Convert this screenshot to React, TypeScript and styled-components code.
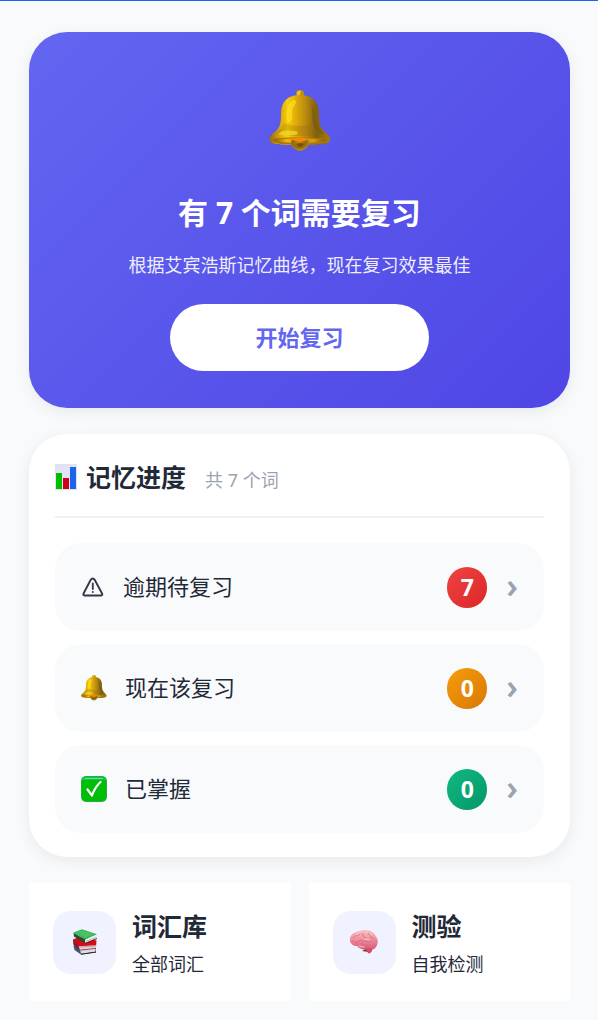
import React from 'react';
import styled, { createGlobalStyle } from 'styled-components';

const GlobalStyle = createGlobalStyle`
  *, *::before, *::after { box-sizing: border-box; }
  body {
    margin: 0;
    background: #f9fafc;
    color: #1f2937;
    font-family: 'Noto Sans', 'Noto Sans CJK SC', sans-serif;
  }
  button { font-family: inherit; color: inherit; border: 0; cursor: pointer; }
  h1, h2, p { margin: 0; }
  svg { display: block; flex: none; }
`;

const Page = styled.main`
  display: flex;
  flex-direction: column;
  gap: 26px;
  padding: 31px 28px 19px 29px;
  border-top: 1px solid #2563eb;
`;

const Hero = styled.section`
  display: flex;
  flex-direction: column;
  align-items: center;
  padding: 58px 24px 37px;
  border-radius: 38px;
  background: linear-gradient(135deg, #6366f1 0%, #4f46e5 100%);
  box-shadow: 0 4px 16px rgba(0, 0, 0, 0.07);
  color: #fff;
  text-align: center;
`;

const HeroTitle = styled.h1`
  margin-top: 41px;
  font-size: 30px;
  line-height: 40px;
  font-weight: 700;
`;

const HeroText = styled.p`
  margin-top: 18px;
  font-size: 18px;
  line-height: 28px;
  opacity: 0.9;
`;

const StartButton = styled.button`
  margin-top: 25px;
  padding: 0 85px 4px;
  height: 67px;
  border-radius: 34px;
  background: #fff;
  color: #6366f1;
  font-size: 22px;
  font-weight: 700;
`;

const Card = styled.section`
  padding: 24px 26px 24px;
  border-radius: 38px;
  background: #fff;
  box-shadow: 0 4px 16px rgba(0, 0, 0, 0.07);
`;

const CardHeader = styled.header`
  display: flex;
  align-items: center;
  gap: 19px;
  padding-bottom: 20px;
  border-bottom: 2px solid #eff0f2;
  margin-bottom: 25px;
`;

const CardTitle = styled.h2`
  display: flex;
  align-items: center;
  gap: 9px;
  font-size: 25px;
  line-height: 38px;
  font-weight: 700;
`;

const CardNote = styled.span`
  padding-top: 6px;
  font-size: 18px;
  line-height: 28px;
  color: #9ca3af;
`;

const RowList = styled.div`
  display: flex;
  flex-direction: column;
  gap: 13px;
`;

const Row = styled.button`
  display: flex;
  align-items: center;
  width: 100%;
  height: 88px;
  padding: 0 26px;
  border-radius: 26px;
  background: #f9fafc;
  font-size: 22px;
  text-align: left;
`;

const RowLabel = styled.span`
  flex: 1;
  margin-left: 18px;
  padding-bottom: 3px;
  line-height: 32px;
`;

const Badge = styled.span<{ $from: string; $to: string }>`
  min-width: 40px;
  height: 41px;
  border-radius: 20px;
  background: linear-gradient(135deg, ${(p) => p.$from}, ${(p) => p.$to});
  color: #fff;
  font-size: 23px;
  font-weight: 700;
  line-height: 40px;
  text-align: center;
`;

const Chevron = styled.span`
  margin-left: 19px;
  padding-bottom: 5px;
  color: #9ca3af;
  font-size: 34px;
  font-weight: 600;
  line-height: 40px;
`;

const Tiles = styled.nav`
  display: grid;
  grid-template-columns: 1fr 1fr;
  gap: 18px;
`;

const Tile = styled.button`
  display: flex;
  align-items: center;
  gap: 16px;
  height: 118px;
  padding: 0 24px;
  background: #fff;
  text-align: left;
`;

const TileIcon = styled.span`
  display: flex;
  align-items: center;
  justify-content: center;
  flex: none;
  width: 63px;
  height: 63px;
  border-radius: 18px;
  background: #f0f3ff;
`;

const TileText = styled.span`
  display: flex;
  flex-direction: column;
  gap: 2px;
  padding-top: 4px;
`;

const TileTitle = styled.strong`
  font-size: 25px;
  line-height: 38px;
  font-weight: 700;
`;

const TileNote = styled.span`
  font-size: 18px;
  line-height: 34px;
`;

function Bell({ size, id }: { size: number; id: string }) {
  return (
    <svg width={size} height={size} viewBox="0 0 62 62" aria-hidden="true">
      <defs>
        <linearGradient id={`${id}-body`} x1="0" x2="1" y1="0" y2="0">
          <stop offset="0" stopColor="#9a6b0c" />
          <stop offset="0.14" stopColor="#cf9c0c" />
          <stop offset="0.3" stopColor="#f6cf08" />
          <stop offset="0.45" stopColor="#dca90c" />
          <stop offset="0.6" stopColor="#b98a10" />
          <stop offset="0.78" stopColor="#80600f" />
          <stop offset="1" stopColor="#a87a0e" />
        </linearGradient>
        <linearGradient id={`${id}-rim`} x1="0" x2="1" y1="0" y2="0">
          <stop offset="0" stopColor="#7a5210" />
          <stop offset="0.25" stopColor="#f0b808" />
          <stop offset="0.5" stopColor="#ee8d08" />
          <stop offset="0.75" stopColor="#d79c10" />
          <stop offset="1" stopColor="#6f4d10" />
        </linearGradient>
        <radialGradient id={`${id}-ball`} cx="0.45" cy="0.35" r="0.7">
          <stop offset="0" stopColor="#c28a10" />
          <stop offset="0.5" stopColor="#8d6a12" />
          <stop offset="1" stopColor="#c79a14" />
        </radialGradient>
      </defs>
      <path d="M27 7V3q0-3 4-3t4 3v4z" fill="#b98c14" />
      <path d="M28 2q2-2 4-1l-1 4h-3z" fill="#e9c333" />
      <path d="M12 24C12 11 19 5 31 5s19 6 19 19c0 9 1 13 5 17 3 3 6 5 6 9 0 5-13 5-30 5S1 55 .500 50C0 46 4 44 7 41c4-4 5-8 5-17z" fill={`url(#${id}-body)`} />
      <path d="M1 49c12-2 48-2 60 0-3 5-16 6-30 6S4 54 1 49z" fill="#a9760c" />
      <path d="M4 50c12-2 42-2 54 0-5 2-14 3-27 3S9 52 4 50z" fill={`url(#${id}-rim)`} />
      <path d="M15 33c9 4 25 3 33 0 1 4 4 7 7 10-13 4-36 4-48 0 4-3 7-7 8-10z" fill="#8a6410" opacity="0.25" />
      <path d="M19 16c2-6 8-8 8-4-1 5-5 5-4 13s-5 9-5 5c0-5-1-9 1-14z" fill="#ffe421" opacity="0.65" />
      <path d="M10 43c3-3 9-3 16-2 4 1 4 4-2 4s-16 1-14-2z" fill="#ffe92c" opacity="0.6" />
      <path d="M42 13c5 6 4 14 5 20 1 5 6 8 9 12-10-4-13-10-13-18 0-6 0-10-1-14z" fill="#6f5310" opacity="0.4" />
      <path d="M22 50q9-3 18 0v2q-1 8-9 9-8-1-9-9z" fill={`url(#${id}-ball)`} />
      <path d="M22 49q9-3 17 0-4 3-8 3t-9-3z" fill="#f98a00" />
      <path d="M27 54q4-2 8 0l-3 3q-3 0-5-3z" fill="#5f420e" opacity="0.7" />
    </svg>
  );
}

function ChartIcon() {
  return (
    <svg width="22" height="26" viewBox="0 0 22 26" aria-hidden="true">
      <path d="M0 0h22v26H0z" fill="#dfe3ee" />
      <path d="M1 2h20v23H1z" fill="#e2e3f7" />
      <path d="M1 9h6v16H1z" fill="#00bd00" />
      <path d="M8 14h6v11H8z" fill="#cf0017" />
      <path d="M15 3h6v22h-6z" fill="#1e64e8" />
    </svg>
  );
}

function WarningIcon() {
  return (
    <svg width="24" height="24" viewBox="0 0 24 24" fill="none" stroke="#303846" strokeLinecap="round" aria-hidden="true">
      <path d="M9.800 4.600 2.600 18.400Q1.700 20.500 4 20.500H19.600Q22 20.500 21 18.400L13.600 4.600Q11.700 2.300 9.800 4.600Z" strokeWidth="2" strokeLinejoin="round" />
      <path d="M11.800 8.500v5.500" strokeWidth="1.800" />
      <path d="M11.800 17v.1" strokeWidth="2" />
    </svg>
  );
}

function CheckIcon() {
  return (
    <svg width="26" height="26" viewBox="0 0 26 26" aria-hidden="true">
      <rect width="26" height="26" rx="5" fill="#24b13b" />
      <rect x="1" y="1" width="24" height="24" rx="4" fill="#00bd08" />
      <path d="M3 1h20q2 0 2 3H1q0-3 2-3z" fill="#08c94f" />
      <path d="M4 2.500h18" stroke="#69d98b" strokeWidth="1" />
      <path d="M6.500 13.500 11 19.500Q14 11 19.500 6" fill="none" stroke="#fff" strokeWidth="2.200" strokeLinecap="round" strokeLinejoin="round" />
    </svg>
  );
}

function BooksIcon() {
  return (
    <svg width="26" height="26" viewBox="0 0 26 26" aria-hidden="true">
      <path d="M1.500 17 8 15l16 4v4.500L9 25.500 2.500 21z" fill="#4a4f74" />
      <path d="m8 20.500 15.500-1.500v4L9 24.700z" fill="#dcdde0" />
      <path d="m8 20 16-1.300v1L8.500 21.500z" fill="#b21525" />
      <path d="M9 25.300 24 23" stroke="#252832" strokeWidth="1" />
      <path d="M1 10.500 7 8l17.500 3.500-.5 6.500-17 2-5-4z" fill="#df0714" />
      <path d="m6.500 17.200 17.500-1v2.800l-16 1.700z" fill="#d3d4d8" />
      <path d="M1 10.500 6.500 17v3.500L1.500 16z" fill="#6b2740" />
      <path d="m7 18 16.500-1" stroke="#9a9ba6" strokeWidth=".7" />
      <path d="M1.500 3.800 13 10.500v3.700L2 7.500z" fill="#15552f" />
      <path d="m13 10.500 11.800-4.200v3.200L13 14.200z" fill="#eceeed" />
      <path d="M1.500 3.500 10 .3 25 5.200 13 10.500z" fill="#36b350" />
      <path d="M4 3.400 10 1.200 22 5l-9 4z" fill="#5bc86b" opacity=".65" />
      <path d="m13.500 12.400 11-4" stroke="#a5aaa7" strokeWidth=".7" />
      <path d="m13 14.300 12-4.700" stroke="#20342b" strokeWidth=".9" />
    </svg>
  );
}

function BrainIcon() {
  return (
    <svg width="30" height="26" viewBox="0 0 30 26" aria-hidden="true">
      <defs>
        <linearGradient id="brain-fill" x1="0" x2="0" y1="0" y2="1">
          <stop offset="0" stopColor="#f9c1c2" />
          <stop offset="0.5" stopColor="#ef8e9f" />
          <stop offset="1" stopColor="#d85872" />
        </linearGradient>
      </defs>
      <path d="M17 19c-2 2-3 2-4 3l6 1 3-3z" fill="#6c4e28" />
      <path d="M1 12C0 6 5 3 10 2c6-2 13-1 16 4 3 3 4 8 1 12-2 3-5 3-7 2-5 1-10 0-12-3-4 0-6-2-7-5z" fill="url(#brain-fill)" />
      <path d="M17 20c4-2 7-1 6 2-1 2-3 3-4 2z" fill="#d94b68" />
      <path d="M4 9c2-4 5-1 7-4M7 14c3-2 5-4 9-2s6-1 8 1M13 4c2 2 0 4 4 5M20 3c-2 3 3 3 2 6 3-1 3 2 5 3M2 13c3-2 4-1 6 3 5 3 8-2 12 1s4 0 6-1M14 12c-2 2-1 3 1 5" fill="none" stroke="#da6e86" strokeWidth="1" strokeLinecap="round" />
      <path d="M7 6q3-3 7-3M17 3q4 0 6 3M15 10q3 0 5 1M10 17q2 1 5 1" fill="none" stroke="#fbc8c6" strokeWidth="1" strokeLinecap="round" />
    </svg>
  );
}

const rows = [
  { label: '逾期待复习', count: 7, from: '#ef4444', to: '#dc2626', icon: <WarningIcon /> },
  { label: '现在该复习', count: 0, from: '#f59e0b', to: '#d97706', icon: <Bell size={26} id="bell-row" /> },
  { label: '已掌握', count: 0, from: '#10b981', to: '#059669', icon: <CheckIcon /> },
];

const tiles = [
  { title: '词汇库', note: '全部词汇', icon: <BooksIcon /> },
  { title: '测验', note: '自我检测', icon: <BrainIcon /> },
];

export default function App() {
  return (
    <>
      <GlobalStyle />
      <Page lang="zh-CN">
        <Hero>
          <Bell size={62} id="bell-hero" />
          <HeroTitle>有 7 个词需要复习</HeroTitle>
          <HeroText>根据艾宾浩斯记忆曲线，现在复习效果最佳</HeroText>
          <StartButton type="button">开始复习</StartButton>
        </Hero>
        <Card>
          <CardHeader>
            <CardTitle>
              <ChartIcon />
              记忆进度
            </CardTitle>
            <CardNote>共 7 个词</CardNote>
          </CardHeader>
          <RowList>
            {rows.map((row) => (
              <Row type="button" key={row.label}>
                {row.icon}
                <RowLabel>{row.label}</RowLabel>
                <Badge $from={row.from} $to={row.to}>{row.count}</Badge>
                <Chevron aria-hidden="true">›</Chevron>
              </Row>
            ))}
          </RowList>
        </Card>
        <Tiles>
          {tiles.map((tile) => (
            <Tile type="button" key={tile.title}>
              <TileIcon>{tile.icon}</TileIcon>
              <TileText>
                <TileTitle>{tile.title}</TileTitle>
                <TileNote>{tile.note}</TileNote>
              </TileText>
            </Tile>
          ))}
        </Tiles>
      </Page>
    </>
  );
}
